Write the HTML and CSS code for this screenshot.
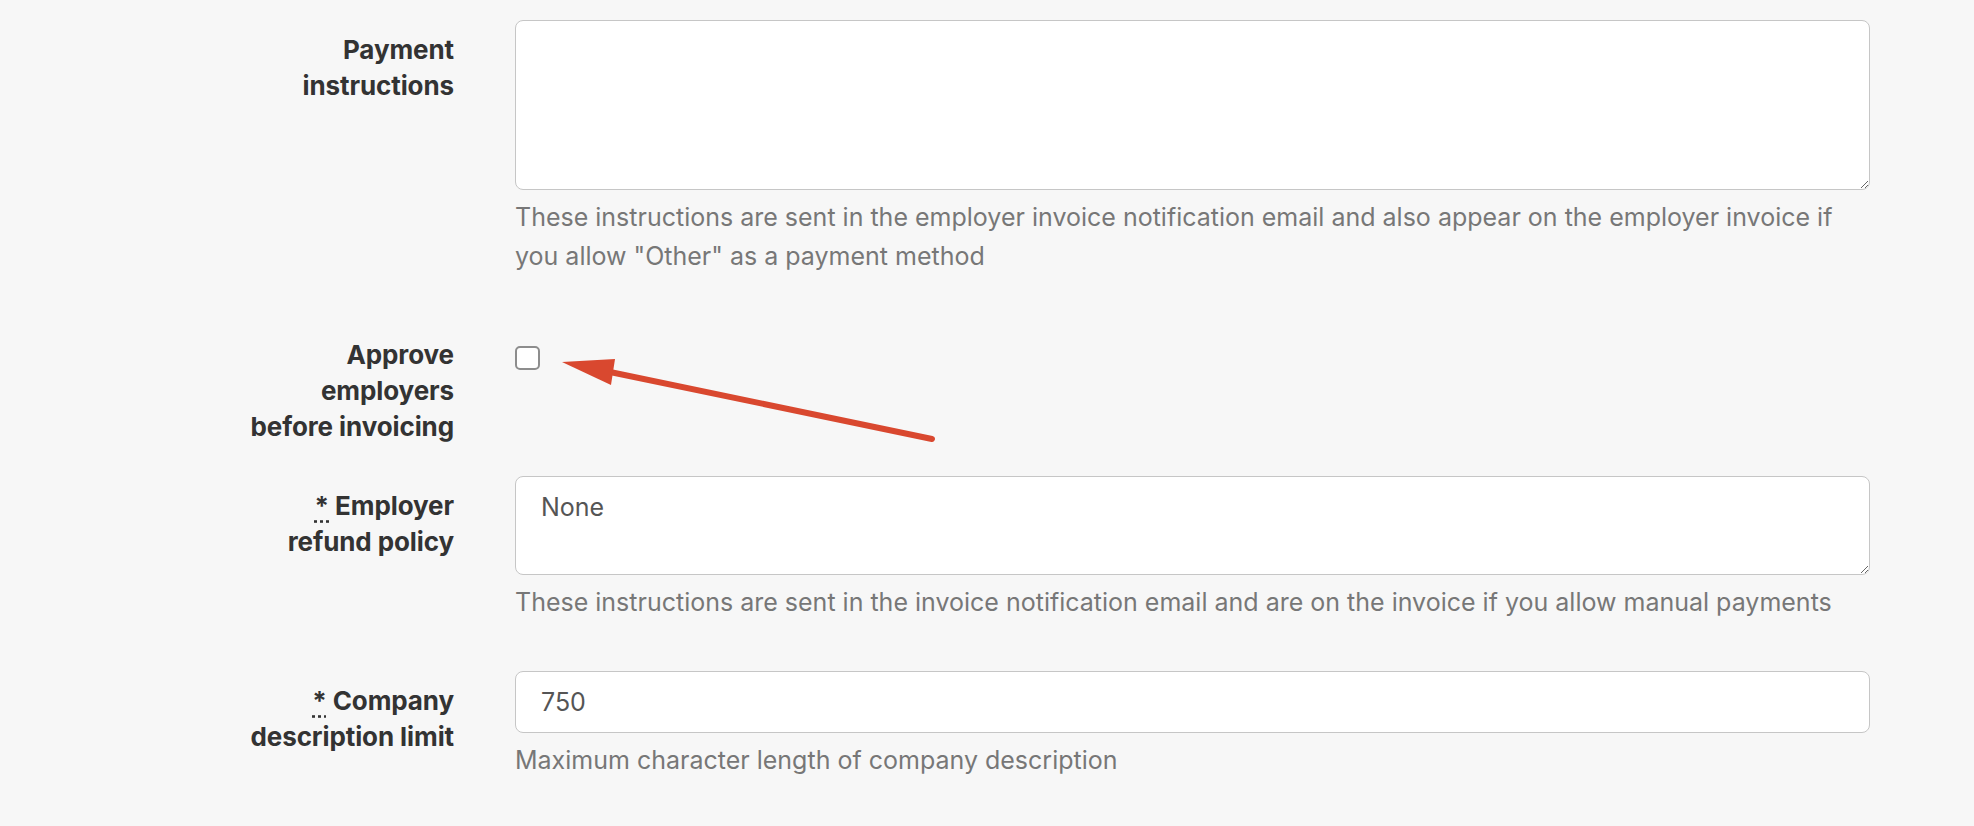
FILE: index.html
```html
<!DOCTYPE html>
<html lang="en">
<head>
  <meta charset="UTF-8" />
  <title>Employer settings</title>
  <link rel="stylesheet" href="styles.css">
</head>
<body>

  <form class="settings-form">
    <div class="form-row">
      <label class="form-label" for="paymentInstructions">Payment instructions</label>
      <div class="form-field">
        <textarea id="paymentInstructions" class="text-area tall"></textarea>
        <p class="hint">These instructions are sent in the employer invoice notification email and also appear on the employer invoice if you allow "Other" as a payment method</p>
      </div>
    </div>

    <div class="form-row">
      <label class="form-label" for="approveEmployers">Approve employers before invoicing</label>
      <div class="form-field">
        <input type="checkbox" id="approveEmployers" class="check">
      </div>
    </div>

    <div class="form-row">
      <label class="form-label" for="refundPolicy"><abbr title="required">*</abbr> Employer refund policy</label>
      <div class="form-field">
        <textarea id="refundPolicy" class="text-area short">None</textarea>
        <p class="hint">These instructions are sent in the invoice notification email and are on the invoice if you allow manual payments</p>
      </div>
    </div>

    <div class="form-row">
      <label class="form-label" for="descriptionLimit"><abbr title="required">*</abbr> Company description limit</label>
      <div class="form-field">
        <input type="text" id="descriptionLimit" class="text-input" value="750">
        <p class="hint">Maximum character length of company description</p>
      </div>
    </div>
  </form>

  <!-- red callout pointing at the checkbox -->
  <svg class="callout" width="1974" height="826" viewBox="0 0 1974 826">
    <line x1="610" y1="372" x2="932" y2="439" stroke="#d9482f" stroke-width="6" stroke-linecap="round"/>
    <polygon points="562,362 615,359 611,385" fill="#d9482f"/>
  </svg>

</body>
</html>
```

FILE: styles.css
```css
* {
  margin: 0;
  padding: 0;
  box-sizing: border-box;
}

html, body {
  height: 100%;
  overflow: hidden;
}

body {
  background: #f7f7f7;
  font-family: Inter, "Noto Sans", sans-serif;
  color: #333;
}

.settings-form {
  padding: 20px 104px 0 0;
}

.form-row {
  display: grid;
  grid-template-columns: 454px 1fr;
  column-gap: 61px;
  margin-bottom: 31px;
}

.form-label {
  justify-self: end;
  width: 218px;
  padding-top: 12px;
  text-align: right;
  font-size: 26px;
  line-height: 36px;
  font-weight: 700;
  letter-spacing: -0.1px;
  color: #333;
}

.form-label abbr {
  text-decoration: underline dotted;
  text-underline-offset: 5px;
}

.form-field {
  display: flex;
  flex-direction: column;
}

.text-area,
.text-input {
  width: 100%;
  background: #fff;
  border: 1px solid #c6c6c6;
  border-radius: 8px;
  font-family: inherit;
  font-size: 25px;
  color: #555;
  outline: none;
}

.text-area {
  padding: 15px 25px;
  line-height: 30px;
  resize: vertical;
}

.text-area.tall {
  height: 170px;
}

.text-area.short {
  height: 99px;
}

.text-input {
  height: 62px;
  padding: 0 25px;
}

.hint {
  margin: 8px 0 18px;
  font-size: 25px;
  line-height: 39px;
  color: #777;
}

.check {
  appearance: none;
  width: 25px;
  height: 24px;
  margin-top: 21px;
  background: #fff;
  border: 2px solid #8d8d8d;
  border-radius: 5px;
}

.callout {
  position: absolute;
  top: 0;
  left: 0;
  pointer-events: none;
}
```
